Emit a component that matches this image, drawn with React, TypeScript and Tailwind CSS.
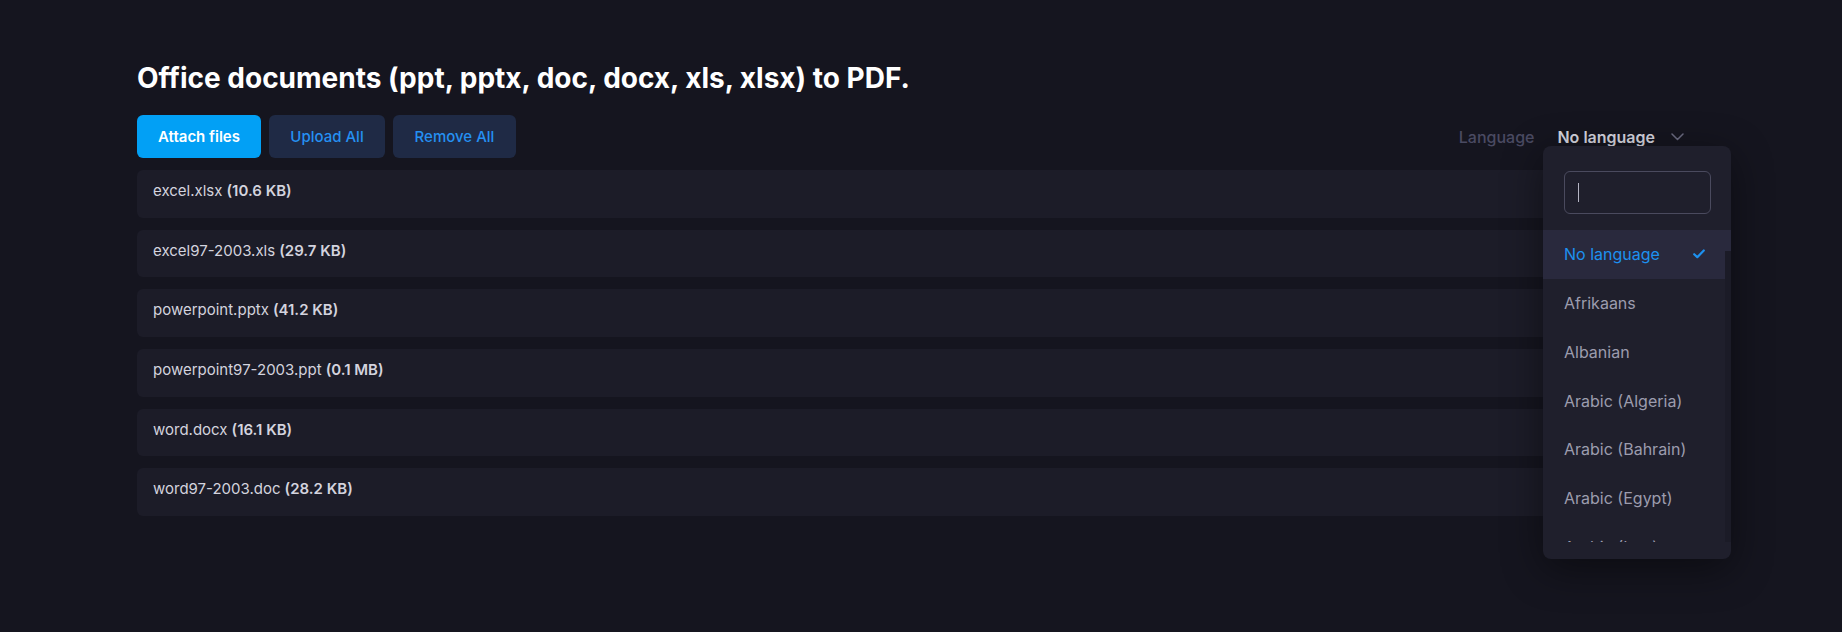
import { useState } from "react";

type FileItem = {
    name: string;
    size: string;
};

const files: FileItem[] = [
    { name: "excel.xlsx", size: "10.6 KB" },
    { name: "excel97-2003.xls", size: "29.7 KB" },
    { name: "powerpoint.pptx", size: "41.2 KB" },
    { name: "powerpoint97-2003.ppt", size: "0.1 MB" },
    { name: "word.docx", size: "16.1 KB" },
    { name: "word97-2003.doc", size: "28.2 KB" },
];

const languages = [
    "No language",
    "Afrikaans",
    "Albanian",
    "Arabic (Algeria)",
    "Arabic (Bahrain)",
    "Arabic (Egypt)",
    "Arabic (Iraq)",
    "Arabic (Jordan)",
];

function LanguageMenu({ selected }: { selected: string }) {
    return (
        <div className="absolute right-[-26px] top-[31px] z-10 w-[188px] rounded-lg bg-[#1f1f2c] pt-[25px] pb-[17px] shadow-[0_10px_40px_rgba(0,0,0,0.45)]">
            <div className="pl-[21px] pr-[20px]">
                <div className="flex h-[43px] items-center rounded-md border border-[#4a4a5e] px-[13px]">
                    <div className="h-[19px] w-px bg-[#b5b5c4]" />
                </div>
            </div>
            <div className="relative mt-[16px] h-[312px] overflow-hidden">
                <div className="absolute right-0 top-[21px] bottom-0 w-[6px] bg-[#1b1b27]" />
                {languages.map((lang) => {
                    const active = lang === selected;
                    return (
                        <div
                            key={lang}
                            className={
                                active
                                    ? "flex h-[48.75px] items-center justify-between bg-[#29293d] pl-[21px] pr-[26px] text-[16px] text-[#1d91f0]"
                                    : "flex h-[48.75px] items-center pl-[21px] text-[16px] text-[#9c9cae]"
                            }
                        >
                            <span>{lang}</span>
                            {active && (
                                <svg width="12" height="10" viewBox="0 0 12 10" fill="none">
                                    <path d="M1.2 5.2 L4.3 8.2 L10.8 1.5" stroke="#1d91f0" strokeWidth="2.2" strokeLinecap="round" strokeLinejoin="round" />
                                </svg>
                            )}
                        </div>
                    );
                })}
            </div>
        </div>
    );
}

export default function App() {
    const [language] = useState("No language");

    return (
        <div
            className="min-h-screen bg-[#15151f] px-[137px] pt-[61px]"
            style={{ fontFamily: "Inter, 'Noto Sans', sans-serif" }}
        >
            <h1 className="text-[28px] font-bold leading-[34px] text-white">
                Office documents (ppt, pptx, doc, docx, xls, xlsx) to PDF.
            </h1>

            <div className="mt-[20px] flex items-stretch justify-between">
                <div className="flex gap-[8px]">
                    <button className="h-[43px] w-[124px] rounded-md bg-[#02a0f5] pt-[2px] text-[15px] font-semibold text-white">
                        Attach files
                    </button>
                    <button className="h-[43px] w-[116px] rounded-md bg-[#1f2a45] pt-[2px] text-[15px] font-medium text-[#2590f2]">
                        Upload All
                    </button>
                    <button className="h-[43px] w-[123px] rounded-md bg-[#1f2a45] pt-[2px] text-[15px] font-medium text-[#2590f2]">
                        Remove All
                    </button>
                </div>

                <div className="relative flex items-center">
                    <span className="text-[16px] font-medium text-[#4a4a62]">Language</span>
                    <button className="ml-[23px] flex items-center gap-[16px] pr-[21px] text-[16px] font-semibold text-[#d5d5df]">
                        {language}
                        <svg width="13" height="8" viewBox="0 0 13 8" fill="none">
                            <path d="M1 1 L6.5 6.5 L12 1" stroke="#6b6b80" strokeWidth="1.5" strokeLinecap="round" strokeLinejoin="round" />
                        </svg>
                    </button>
                    <LanguageMenu selected={language} />
                </div>
            </div>

            <div className="mt-[12px] flex flex-col gap-[12px]">
                {files.map((f) => (
                    <div
                        key={f.name}
                        className="h-[47.7px] rounded-md bg-[#1c1c28] px-[16px] pt-[12px] text-[15px] leading-[18px] text-[#d3d3de]"
                    >
                        <span>{f.name}</span>
                        <span className="ml-[4px] font-semibold">({f.size})</span>
                    </div>
                ))}
            </div>
        </div>
    );
}
